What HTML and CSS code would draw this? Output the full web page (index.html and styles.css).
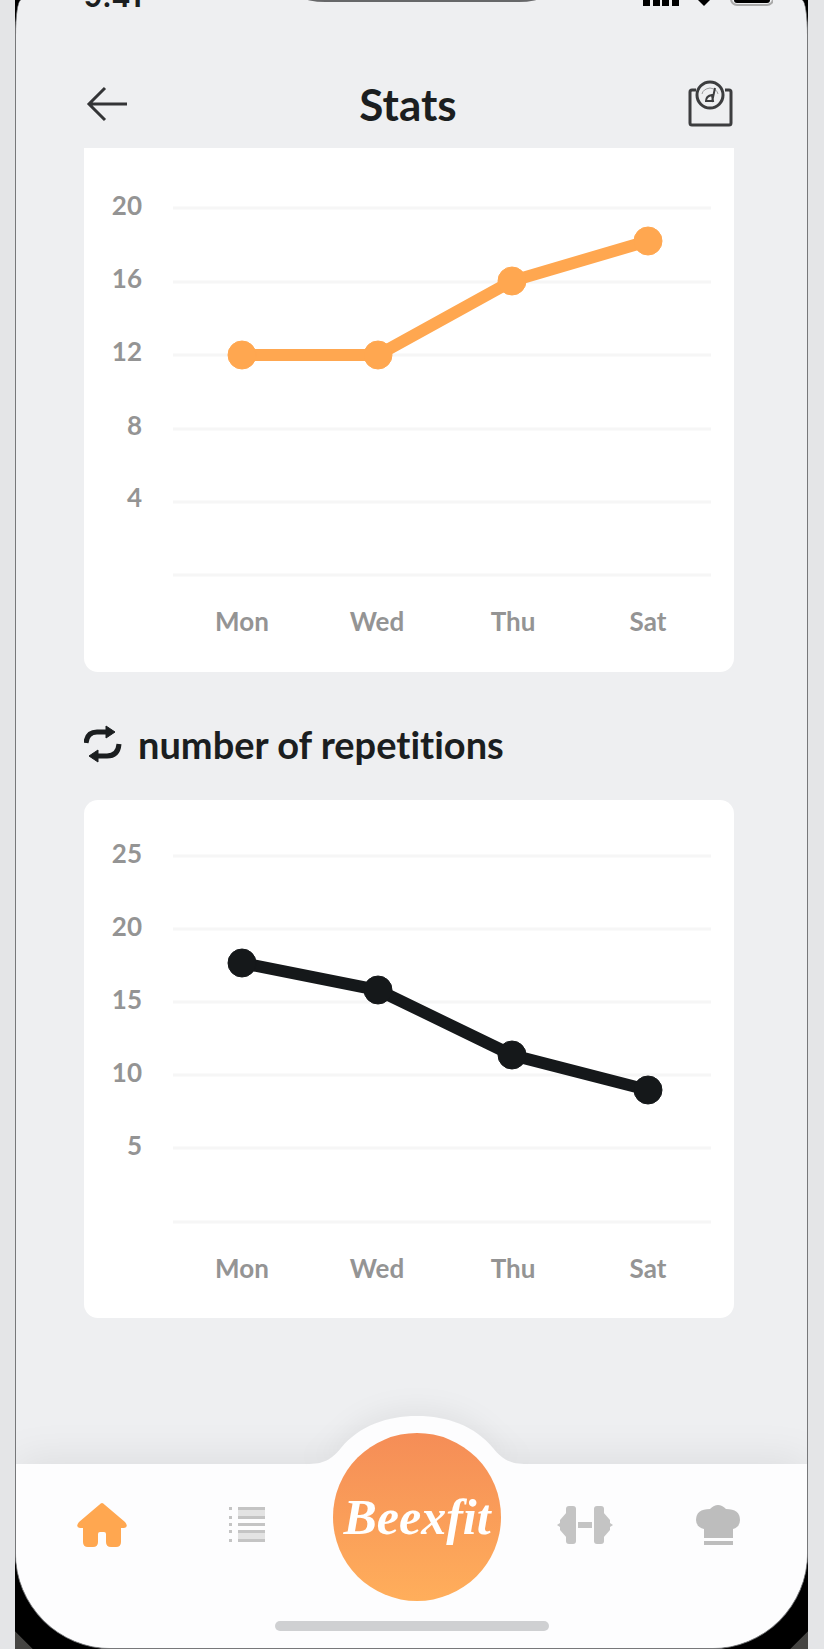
FILE: index.html
```html
<!DOCTYPE html>
<html lang="en">
<head>
    <meta charset="UTF-8">
    <meta name="viewport" content="width=device-width, initial-scale=1.0">
    <title>Stats</title>
    <link rel="stylesheet" href="styles.css">
</head>
<body>
    <div class="phone">
        <div class="screen">
            <div class="status-bar">
                <span class="time">9:41</span>
                <span class="notch"></span>
                <svg class="status-icons" viewBox="0 0 130 24" aria-hidden="true">
                    <path d="M0 14h7v8H0zM10 10h7v12h-7zM19 5h7v17h-7zM29 0h7v22h-7z"/>
                    <path d="M49 10q12-12 24 0L61 22z"/>
                    <rect x="88" y="1" width="42" height="20" rx="6" fill="none" stroke="#aaa" stroke-width="2"/>
                    <rect x="91" y="3" width="36" height="16" rx="3"/>
                </svg>
            </div>

            <header class="header">
                <button class="icon-btn" aria-label="Back">
                    <svg width="46" height="48" viewBox="0 0 46 48" fill="none" stroke="#333436" stroke-width="3">
                        <path d="M43 24H5M21 8L5 24l16 16"/>
                    </svg>
                </button>
                <h1>Stats</h1>
                <button class="icon-btn" aria-label="Weight">
                    <svg width="48" height="48" viewBox="0 0 48 48" fill="none" stroke="#3c3d3f" stroke-width="3">
                        <path d="M10 10H6q-2 0-2 2v31q0 2 2 2h37q2 0 2-2V12q0-2-2-2h-4"/>
                        <circle cx="24" cy="15" r="13"/>
                        <path d="M16 14q1-5 8-6 7 1 8 6" stroke-width="1" stroke="#9a9b9d"/>
                        <path d="M29 8l-3 14M26 15q-6 1-6 6h7z" stroke-width="2"/>
                    </svg>
                </button>
            </header>

            <main class="content">
                <section class="card card-first">
                    <svg class="chart" viewBox="0 0 650 524" role="img" aria-label="Weekly chart">
                        <path class="grid" d="M89 60h538M89 134h538M89 207h538M89 281h538M89 354h538M89 427h538"/>
                        <g class="y-labels">
                            <text x="58" y="67">20</text>
                            <text x="58" y="140">16</text>
                            <text x="58" y="213">12</text>
                            <text x="58" y="287">8</text>
                            <text x="58" y="359">4</text>
                        </g>
                        <g class="x-labels">
                            <text x="158" y="483">Mon</text>
                            <text x="293" y="483">Wed</text>
                            <text x="429" y="483">Thu</text>
                            <text x="564" y="483">Sat</text>
                        </g>
                        <g class="series orange">
                            <polyline points="158,207 294,207 428,133 564,93"/>
                            <circle cx="158" cy="207" r="14"/>
                            <circle cx="294" cy="207" r="14"/>
                            <circle cx="428" cy="133" r="14"/>
                            <circle cx="564" cy="93" r="14"/>
                        </g>
                    </svg>
                </section>

                <h2>
                    <svg width="38" height="38" viewBox="0 0 38 38" fill="none" stroke="#1b1e20" stroke-width="5" aria-hidden="true">
                        <path d="M2 18Q3 7 13 7h12M35 19q-1 12-12 12H13"/>
                        <path d="M22 1l9 6-9 6zM14 25l-9 6 9 6z" fill="#1b1e20" stroke-width="1"/>
                    </svg>
                    number of repetitions
                </h2>

                <section class="card">
                    <svg class="chart" viewBox="0 0 650 518" role="img" aria-label="Number of repetitions chart">
                        <path class="grid" d="M89 56h538M89 129h538M89 202h538M89 275h538M89 348h538M89 422h538"/>
                        <g class="y-labels">
                            <text x="58" y="63">25</text>
                            <text x="58" y="136">20</text>
                            <text x="58" y="209">15</text>
                            <text x="58" y="282">10</text>
                            <text x="58" y="355">5</text>
                        </g>
                        <g class="x-labels">
                            <text x="158" y="478">Mon</text>
                            <text x="293" y="478">Wed</text>
                            <text x="429" y="478">Thu</text>
                            <text x="564" y="478">Sat</text>
                        </g>
                        <g class="series dark">
                            <polyline points="158,163 294,190 428,255 564,290"/>
                            <circle cx="158" cy="163" r="14"/>
                            <circle cx="294" cy="190" r="14"/>
                            <circle cx="428" cy="255" r="14"/>
                            <circle cx="564" cy="290" r="14"/>
                        </g>
                    </svg>
                </section>
            </main>

            <nav class="tab-bar">
                <div class="tabs">
                    <a class="active" href="#home" aria-label="Home">
                        <svg width="50" height="44" viewBox="0 0 50 44">
                            <path d="M25 0q1 0 3 2l20 17q4 5-1 6h-3v14q0 5-5 5h-5q-5 0-5-5v-8q0-2-2-2h-4q-2 0-2 2v8q0 5-5 5h-5q-5 0-5-5V25H3q-5-1-1-6L22 2q2-2 3-2z"/>
                        </svg>
                    </a>
                    <a href="#list" aria-label="List">
                        <svg width="38" height="38" viewBox="0 0 38 38">
                            <path fill="#e3e3e3" d="M10 2h27v10H10zM10 26h27v10H10z"/>
                            <path d="M10 1h27v3H10zM10 10h27v3H10zM10 17h27v3H10zM10 24h27v3H10zM10 33h27v3H10zM1 1h3v3H1zM1 10h3v3H1zM1 17h3v3H1zM1 24h3v3H1zM1 33h3v3H1z"/>
                        </svg>
                    </a>
                    <div class="center">
                        <svg class="hump" viewBox="0 0 240 50" width="240" height="50" aria-hidden="true">
                            <path d="M10 50v-2c17 0 24-4 34-16C62 10 90 0 120 0s58 10 76 32c10 12 17 16 34 16v2z"/>
                        </svg>
                        <a class="logo" href="#beexfit">Beexfit</a>
                    </div>
                    <a href="#training" aria-label="Training">
                        <svg width="56" height="38" viewBox="0 0 56 38">
                            <rect x="9" y="0" width="10" height="38" rx="3"/>
                            <rect x="37" y="0" width="10" height="38" rx="3"/>
                            <path d="M10 6L3 14v3l-3 2 3 2v3l7 8zM46 6l7 8v3l3 2-3 2v3l-7 8z"/>
                            <rect x="21" y="16" width="14" height="6"/>
                        </svg>
                    </a>
                    <a href="#recipes" aria-label="Recipes">
                        <svg width="44" height="42" viewBox="0 0 44 42" fill="#bdbdbd">
                            <path d="M14 5q8-8 16 0 14 0 14 11 0 7-7 9v9H8v-9q-8-2-8-9Q0 5 14 5zM8 37h29v4H8z"/>
                        </svg>
                    </a>
                </div>
                <div class="home-indicator"></div>
            </nav>
        </div>
    </div>
</body>
</html>
```
FILE: styles.css
```css
* {
    box-sizing: border-box;
}
body {
    margin: 0;
    background-color: #e4e5e7;
    font-family: Lato, 'Liberation Sans', sans-serif;
    font-variant-ligatures: none;
    color: #1b1e20;
}
.phone {
    min-height: 100vh;
    margin: 0 16px 0 15px;
    display: flex;
    background: linear-gradient(45deg, #454442 12px, transparent 13px),
                linear-gradient(-45deg, #454442 12px, transparent 13px),
                #000;
}
.screen {
    flex: 1;
    display: flex;
    flex-direction: column;
    border: 1px solid #77787a;
    border-top: none;
    border-radius: 6px 6px 96px 96px / 36px 36px 96px 96px;
    background-color: #eeeff1;
    overflow: hidden;
}
.status-bar {
    display: flex;
    justify-content: space-between;
    align-items: flex-end;
    height: 8px;
    padding: 0 34px 0 68px;
    overflow: hidden;
}
.time {
    width: 116px;
    font-family: Inter, sans-serif;
    font-size: 28px;
    font-weight: 700;
    line-height: 22px;
}
.notch {
    width: 274px;
    height: 40px;
    margin-bottom: 6px;
    border-radius: 40px / 20px;
    background-color: #666769;
}
.status-icons {
    width: 130px;
    height: 24px;
    flex-shrink: 0;
}
.header {
    display: flex;
    justify-content: space-between;
    align-items: center;
    height: 140px;
    padding: 52px 73px 0 68px;
}
.header h1 {
    margin: 0;
    font-size: 44px;
    line-height: 48px;
}
.icon-btn {
    display: flex;
    padding: 0;
    border: none;
    background: none;
    cursor: pointer;
}
.content {
    flex: 1;
    padding: 0 73px 144px 68px;
}
.card {
    border-radius: 14px;
    background-color: #fff;
}
.card-first {
    border-radius: 0 0 14px 14px;
}
.chart {
    display: block;
    width: 100%;
    font-size: 26px;
    font-weight: 700;
}
.grid {
    stroke: #f6f6f6;
    stroke-width: 3;
}
.y-labels {
    fill: #949494;
    text-anchor: end;
}
.x-labels {
    fill: #949494;
    text-anchor: middle;
}
.series polyline {
    fill: none;
    stroke-width: 12;
}
.orange {
    fill: #ffa750;
    stroke: #ffa750;
}
.dark {
    fill: #15181a;
    stroke: #15181a;
}
.content h2 {
    display: flex;
    align-items: center;
    gap: 16px;
    margin: 0;
    padding: 48px 0 32px;
    font-size: 38px;
    line-height: 48px;
}
.tab-bar {
    height: 184px;
    background-color: #fdfdfe;
    box-shadow: 0 -4px 40px rgba(0, 0, 0, 0.08);
}
.tabs {
    display: grid;
    grid-template-columns: 172fr 118fr 222fr 113fr 154fr;
    align-items: center;
    justify-items: center;
    height: 122px;
    padding-right: 12px;
    fill: #c4c4c4;
}
.tabs a {
    display: flex;
}
.tabs .active {
    fill: #ffa750;
}
.center {
    position: relative;
    height: 122px;
}
.hump {
    position: absolute;
    left: 50%;
    bottom: 100%;
    margin: 0 0 -2px -120px;
    fill: #fdfdfe;
    filter: drop-shadow(0 -8px 12px rgba(0, 0, 0, 0.05));
    clip-path: inset(-40px -40px 0 -40px);
}
.tabs .logo {
    position: relative;
    align-items: center;
    justify-content: center;
    width: 168px;
    height: 168px;
    margin-top: -31px;
    border-radius: 50%;
    background: linear-gradient(#f58d57, #ffae5b);
    color: #fff;
    font-family: 'Liberation Serif', serif;
    font-size: 50px;
    font-style: italic;
    font-weight: 700;
    text-decoration: none;
}
.home-indicator {
    width: 274px;
    height: 10px;
    margin: 35px auto 0;
    border-radius: 5px;
    background-color: #cfd0d2;
}
```
